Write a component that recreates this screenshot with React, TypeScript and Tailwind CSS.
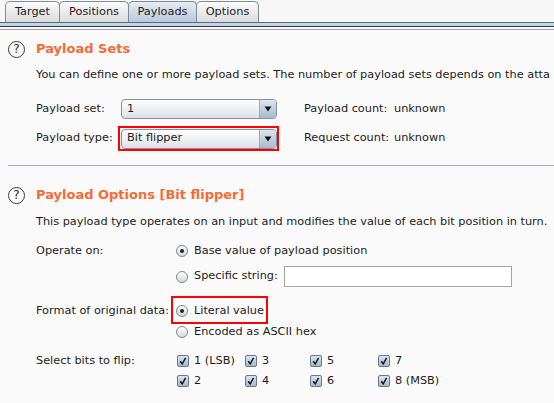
import React from "react";

const Tab = ({ label, w, active }: { label: string; w: string; active?: boolean }) => (
  <div
    className={`${w} h-[21px] -ml-px first:ml-0 flex items-center justify-center rounded-t-[5px] border border-b-0 border-[#7d8a98] ${
      active
        ? "bg-gradient-to-b from-[#e6edf4] to-[#b9c9db] relative z-10"
        : "bg-gradient-to-b from-[#fbfbfb] to-[#dcdcdc]"
    }`}
  >
    {label}
  </div>
);

const Help = () => (
  <div className="w-[17px] h-[17px] rounded-full border border-[#3a3a3a] flex items-center justify-center text-[12px] leading-none text-[#2a2a2a]">
    ?
  </div>
);

const Dropdown = ({ value }: { value: string }) => (
  <div className="w-[156px] h-[20px] rounded-[4px] border border-[#8a909a] bg-gradient-to-b from-[#ffffff] to-[#dde1e7] flex overflow-hidden">
    <div className="flex-1 pl-[5px] flex items-center">{value}</div>
    <div className="w-[17px] border-l border-[#a2abb8] bg-gradient-to-b from-[#dde5ee] to-[#a9bace] flex items-center justify-center">
      <svg width="8" height="6" viewBox="0 0 8 6">
        <path d="M0.5 0.5 L7.5 0.5 L4 5.5 Z" fill="#111" />
      </svg>
    </div>
  </div>
);

const Radio = ({ checked }: { checked?: boolean }) => (
  <div className="w-[12px] h-[12px] rounded-full border border-[#7f8590] bg-gradient-to-b from-[#ffffff] to-[#d3d7dd] flex items-center justify-center">
    {checked && <div className="w-[4px] h-[4px] rounded-full bg-[#222]" />}
  </div>
);

const Check = ({ label }: { label: string }) => (
  <div className="flex items-center h-[16px]">
    <div className="w-[12px] h-[12px] rounded-[2px] border border-[#66788c] bg-gradient-to-b from-[#dce6f0] to-[#a6b9ce] flex items-center justify-center">
      <svg width="10" height="10" viewBox="0 0 10 10">
        <path d="M2.2 5.2 L4.2 7.8 L7.6 1.8" stroke="#1a1a1a" strokeWidth="1.5" fill="none" />
      </svg>
    </div>
    <span className="ml-[5px]">{label}</span>
  </div>
);

export default function App() {
  return (
    <div className="w-[554px] h-[403px] overflow-hidden bg-[#fafafa] font-['DejaVu_Sans',sans-serif] text-[11.3px] text-[#1c1c1c] whitespace-nowrap">
      {/* Tabs */}
      <div className="flex items-end h-[22px] pl-[5px] bg-[#f7f7f7]">
        <Tab label="Target" w="w-[55px]" />
        <Tab label="Positions" w="w-[70px]" />
        <Tab label="Payloads" w="w-[69px]" active />
        <Tab label="Options" w="w-[63px]" />
      </div>
      <div className="h-[5px] border-t border-b border-t-[#5b6b7c] border-b-[#2e3846] bg-[#c5d5e9]" />
      <div className="mt-[2px] h-px bg-[#9c9caa]" />

      {/* Payload Sets */}
      <div className="mt-[10px] flex items-center h-[18px] pl-[8px]">
        <Help />
        <span className="ml-[11px] text-[13px] font-bold text-[#f96a36]">Payload Sets</span>
      </div>
      <div className="mt-[9px] h-[16px] flex items-center pl-[36px]">
        You can define one or more payload sets. The number of payload sets depends on the atta
      </div>

      <div className="mt-[16px] h-[20px] flex items-center pl-[36px]">
        <span className="w-[85px]">Payload set:</span>
        <Dropdown value="1" />
        <span className="ml-[27px] w-[90px]">Payload count:</span>
        <span>unknown</span>
      </div>

      <div className="mt-[7px] h-[25px] flex items-center pl-[36px]">
        <span className="w-[82px]">Payload type:</span>
        <div className="w-[161px] h-[25px] border-2 border-[#ff0000] flex items-center pl-px">
          <Dropdown value="Bit flipper" />
        </div>
        <span className="ml-[25px] w-[90px]">Request count:</span>
        <span>unknown</span>
      </div>

      <div className="mt-[14px] h-px bg-[#a9a9b7] ml-[8px]" />

      {/* Payload Options */}
      <div className="mt-[20px] flex items-center h-[18px] pl-[8px]">
        <Help />
        <span className="ml-[11px] text-[13px] font-bold text-[#f96a36]">Payload Options [Bit flipper]</span>
      </div>
      <div className="mt-[10px] h-[16px] flex items-center pl-[36px]">
        This payload type operates on an input and modifies the value of each bit position in turn.
      </div>

      <div className="mt-[13px] h-[16px] flex items-center pl-[36px]">
        <span className="w-[140px]">Operate on:</span>
        <Radio checked />
        <span className="ml-[6px]">Base value of payload position</span>
      </div>
      <div className="mt-[7px] h-[21px] flex items-center pl-[176px]">
        <Radio />
        <span className="ml-[6px] w-[90px]">Specific string:</span>
        <div className="w-[228px] h-[21px] border border-[#a4a4a4] bg-white" />
      </div>

      <div className="mt-[16px] h-[16px] flex items-center pl-[36px]">
        <span className="w-[140px]">Format of original data:</span>
        <div className="relative flex items-center">
          <Radio checked />
          <span className="ml-[6px]">Literal value</span>
          <div className="absolute left-[-5px] top-[-7px] w-[97px] h-[28px] border-2 border-[#ff0000]" />
        </div>
      </div>
      <div className="mt-[5px] h-[16px] flex items-center pl-[176px]">
        <Radio />
        <span className="ml-[6px]">Encoded as ASCII hex</span>
      </div>

      <div className="mt-[13px] flex pl-[36px]">
        <div className="w-[141px] h-[16px] flex items-center">Select bits to flip:</div>
        <div className="grid grid-cols-[68px_65px_68px_auto] gap-y-[4px]">
          <Check label="1 (LSB)" />
          <Check label="3" />
          <Check label="5" />
          <Check label="7" />
          <Check label="2" />
          <Check label="4" />
          <Check label="6" />
          <Check label="8 (MSB)" />
        </div>
      </div>
    </div>
  );
}
